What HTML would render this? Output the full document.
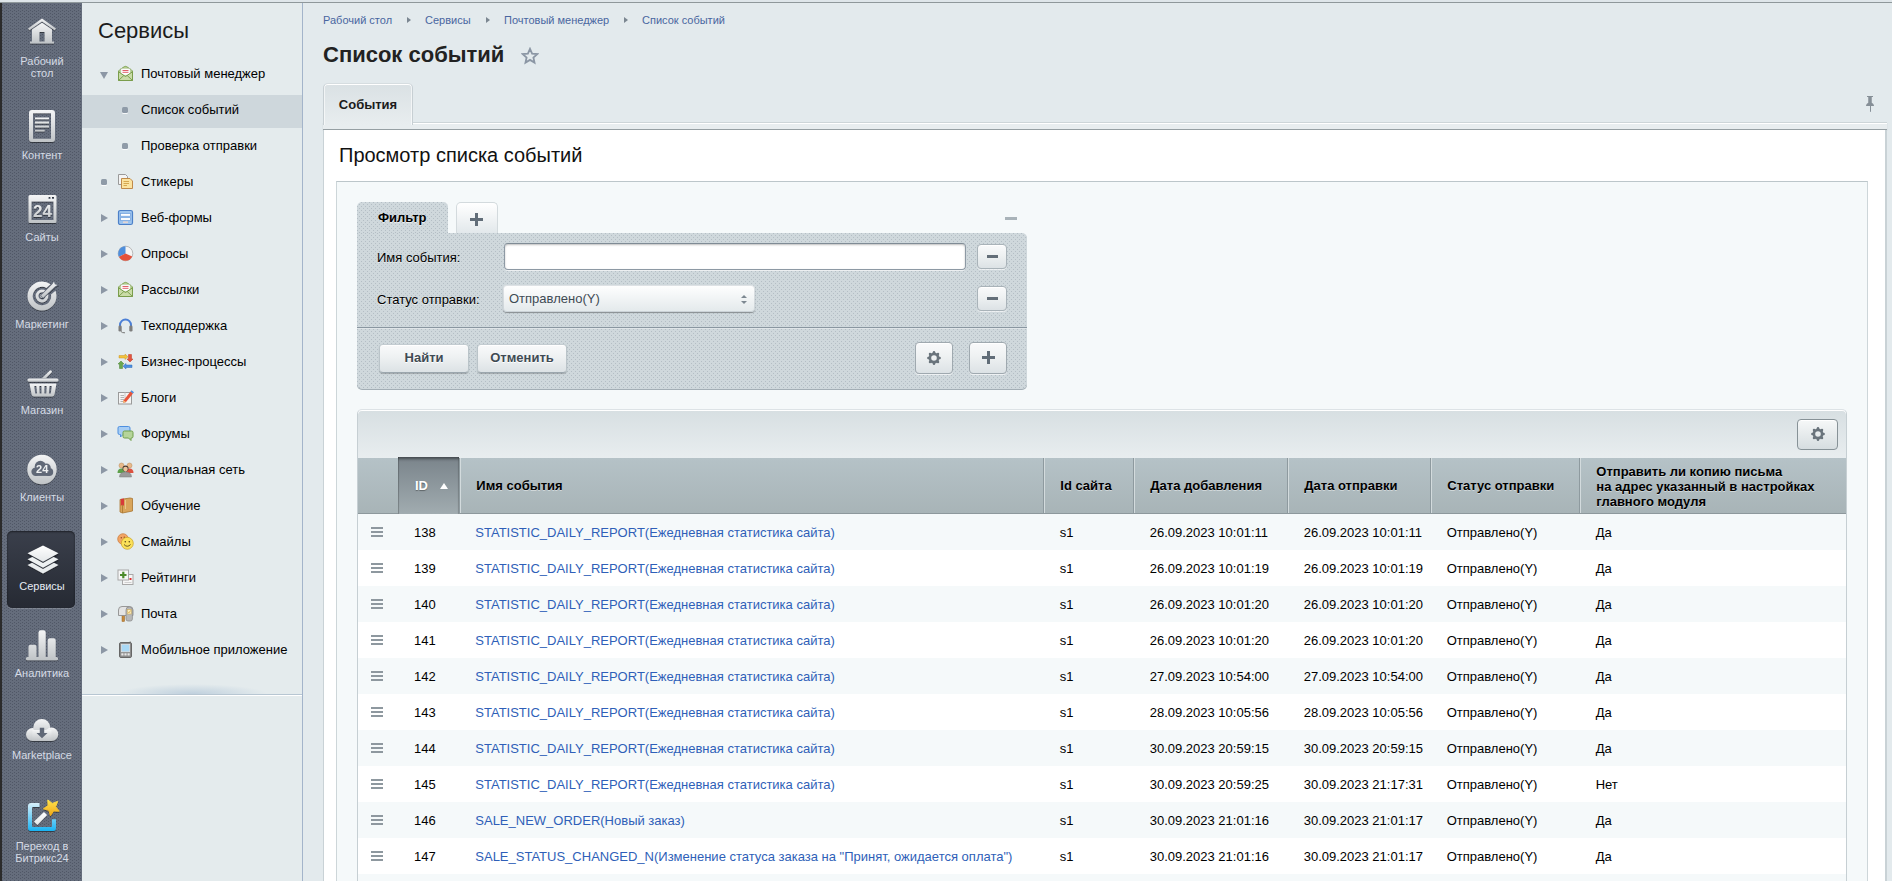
<!DOCTYPE html>
<html lang="ru">
<head>
<meta charset="utf-8">
<title>Список событий</title>
<style>
*{box-sizing:border-box;margin:0;padding:0}
html,body{width:1892px;height:881px;overflow:hidden}
body{font-family:"Liberation Sans",sans-serif;font-size:13px;color:#000;background:#e3eaed;position:relative}
a{text-decoration:none;color:inherit}
.abs{position:absolute}
/* top line */
#topline{position:absolute;left:0;top:0;width:1892px;height:3px;background:#dfe6ea;border-bottom:1px solid #8f989b;z-index:5}
/* dark bar */
#dark{position:absolute;left:0;top:3px;width:82px;height:878px;background-color:#656d7c;background-image:radial-gradient(circle at .5px 1.5px,#505766 0,#505766 .5px,transparent .8px),radial-gradient(circle at 2.5px 2.5px,#505766 0,#505766 .5px,transparent .8px);background-size:4px 3px;border-left:2px solid #2b2b2b}
.mi{position:absolute;left:0;width:80px;text-align:center;color:#d5dbe5;font-size:11px;line-height:12px}
.mi svg{position:absolute}
#act{position:absolute;left:5px;top:528px;width:68px;height:77px;border-radius:5px;background:linear-gradient(#3a3f4b,#262a33);box-shadow:0 1px 0 rgba(255,255,255,.18),inset 0 1px 2px rgba(0,0,0,.5)}
/* submenu */
#sub{position:absolute;left:82px;top:3px;width:221px;height:878px;background:#e4ebed;border-right:1px solid #a3b4ca}
#sub h2{position:absolute;left:16px;top:14px;font-size:22px;font-weight:normal;color:#1c1c1c;line-height:28px}
.si{position:absolute;left:0;width:220px;height:33px;line-height:30px;font-size:13px;color:#000}
.si span{position:absolute;left:59px;top:0;white-space:nowrap}
.si.on{background:#ced7dc}
.arr{position:absolute;left:19px;top:11px;width:0;height:0;border-left:7px solid #8c97a5;border-top:4.5px solid transparent;border-bottom:4.5px solid transparent}
.arrd{position:absolute;left:17.8px;top:12.8px;width:0;height:0;border-top:7.5px solid #8c97a5;border-left:4.8px solid transparent;border-right:4.8px solid transparent}
.dot{position:absolute;width:6px;height:6px;border-radius:1.5px;background:#8f9ba8;box-shadow:0 1px 0 rgba(255,255,255,.8)}
.ic{position:absolute;left:35px;top:6px;width:17px;height:17px}
#subsep{position:absolute;left:0;top:691px;width:220px;height:1px;background:#b7c6d2;box-shadow:0 1px 0 #fff}
#subsep:before{content:"";position:absolute;left:0;top:-11px;width:220px;height:11px;background:radial-gradient(ellipse 75px 10px at 50% 100%,rgba(160,185,208,.55),rgba(160,185,208,0))}
/* main */
#bc{position:absolute;left:323px;top:13px;font-size:11px;line-height:14px;color:#4966a0;white-space:nowrap}
#bc span{position:absolute;top:0;white-space:nowrap}
#bc i{position:absolute;top:4px;width:0;height:0;border-left:4px solid #7b8691;border-top:3.5px solid transparent;border-bottom:3.5px solid transparent}
#title{position:absolute;left:323px;top:40px;font-size:22px;font-weight:bold;color:#222;line-height:30px;white-space:nowrap}
#tab{position:absolute;left:323px;top:83px;width:90px;height:42px;border:1px solid #c7cfd3;border-top-color:#d6dde0;border-bottom:none;border-radius:5px 5px 0 0;background:linear-gradient(#dae1e4,#e8edef);box-shadow:inset 0 1px 0 #fff,inset 1px 0 0 rgba(255,255,255,.6),inset -1px 0 0 rgba(255,255,255,.6);font-size:13px;font-weight:bold;color:#1b1b1b;line-height:41px;text-align:center;z-index:2}
#tabline{position:absolute;left:323px;top:122px;width:1564px;height:8px;background:#e8edef;border-top:1px solid #cdd5d8;border-bottom:1px solid #969fa3;box-shadow:inset 0 1px 0 #fff,0 1px 1px rgba(0,0,0,.12)}
#panel{position:absolute;left:323px;top:130px;width:1564px;height:760px;background:#fff;border-left:1px solid #c9d2d6;border-right:2px solid #c9d2d6}
#ptitle{position:absolute;left:339px;top:142px;font-size:20px;line-height:26px;color:#111;white-space:nowrap}
#inner{position:absolute;left:336px;top:181px;width:1532px;height:720px;background:#f5f9fa;border:1px solid #cdd6d9;border-top-color:#bcc6ca}

#star{position:absolute;left:521px;top:47px}
#pin{position:absolute;left:1864px;top:95px}
/* filter */
.dots{background-color:#cfd8dc;background-image:radial-gradient(circle at .5px .5px,#b4bec5 0,#b4bec5 .5px,transparent .75px),radial-gradient(circle at 2.5px 2.5px,#b4bec5 0,#b4bec5 .5px,transparent .75px);background-size:4px 4px}
#ftab{position:absolute;left:357px;top:202px;width:91px;height:34px;border-radius:5px 5px 0 0;font-size:13px;font-weight:bold;color:#000;text-shadow:0 1px 0 rgba(255,255,255,.6)}
#ftab span{position:absolute;left:21px;top:8px;line-height:15px}
#fplus{position:absolute;left:456px;top:202px;width:42px;height:31px;border:1px solid #d3dadd;border-bottom:none;border-radius:5px 5px 0 0;background:linear-gradient(#fff,#e2e8eb)}
#fmin{position:absolute;left:1005px;top:217px;width:12px;height:3px;background:#a9b3b9}
#fbody{position:absolute;left:357px;top:233px;width:670px;height:156px;border-radius:0 5px 5px 5px;box-shadow:0 1px 0 #a3aeb5}
#fsep{position:absolute;left:357px;top:327px;width:670px;height:1px;background:#8996a0;box-shadow:0 1px 0 #dfe5e8}
.flab{position:absolute;left:377px;font-size:13px;line-height:15px;color:#000;white-space:nowrap;text-shadow:0 1px 0 rgba(255,255,255,.5)}
#finp{position:absolute;left:503.5px;top:243px;width:462px;height:27px;border:1px solid #8d99a4;border-top-color:#7f8b95;border-radius:4px;background:#fff;box-shadow:inset 0 1px 2px rgba(0,0,0,.25),0 1px 0 rgba(255,255,255,.6)}
#fsel{position:absolute;left:503px;top:285px;width:252px;height:27px;border-radius:4px;background:linear-gradient(#fff,#e3e9eb);box-shadow:0 1px 1px rgba(0,0,0,.35),0 0 0 1px rgba(160,172,180,.35) inset;font-size:13px;color:#3f4b54;line-height:28px;padding-left:6px}
.sa{position:absolute;left:238px;width:0;height:0;border-left:3px solid transparent;border-right:3px solid transparent}
.btn{position:absolute;border:1px solid #9fa9af;border-radius:4px;background:linear-gradient(#f9fafb 0%,#eef1f2 45%,#dce2e5 100%);box-shadow:0 1px 0 rgba(255,255,255,.65),inset 0 1px 0 #fff;font-size:13px;font-weight:bold;color:#3f4b54;text-align:center;text-shadow:0 1px 0 #fff}
.b2{border-color:#c3ccd1 #bac4c9 #9ca7ae;box-shadow:0 1px 1px rgba(0,0,0,.22),inset 0 1px 0 #fff}
.mb{width:29.4px;height:25px;left:977.2px;border-color:#a9b3b9}
.mb i{position:absolute;left:9px;top:10px;width:11px;height:3px;background:#636e78}
.plus{position:absolute;width:13px;height:13px}
.plus:before{content:"";position:absolute;left:0;top:5px;width:13px;height:3px;background:#616d78}
.plus:after{content:"";position:absolute;left:5px;top:0;width:3px;height:13px;background:#616d78}
/* table */
#tbl{position:absolute;left:357px;top:409px;width:1490px;height:480px;border:1px solid #c6cfd3;border-top-color:#dde3e6;border-radius:5px 5px 0 0;background:#fff;overflow:hidden}
#tbar{position:absolute;left:0;top:0;width:1488px;height:48px;background:linear-gradient(#d7dfe2,#e8edef);box-shadow:inset 0 1px 0 #fff;border-radius:4px 4px 0 0}
#tgear{position:absolute;left:1439px;top:9px;width:41px;height:31px;border-radius:4px;border:1px solid #879297;background:linear-gradient(#f6f8f8,#d6dde0);box-shadow:inset 0 1px 0 #fff}
#thead{position:absolute;left:0;top:48px;width:1488px;height:56px;background:linear-gradient(#b5c2c7,#a8b4b7);border-bottom:1px solid #8d989c}
.th{position:absolute;top:0;height:56px;font-size:13px;font-weight:bold;color:#000;line-height:15px;text-shadow:0 1px 0 rgba(255,255,255,.45);white-space:nowrap}
.th span{position:absolute;left:16.3px;top:20px}
.sep{position:absolute;top:0;width:2px;height:55px;background:linear-gradient(90deg,#8e9a9f 50%,#d3dbdd 50%)}
#thid{position:absolute;left:40px;top:-1px;width:61px;height:57px;font-weight:bold;background:linear-gradient(#7a848b,#a1acb0);box-shadow:inset 0 3px 3px -1px rgba(0,0,0,.45),inset 1px 0 0 rgba(0,0,0,.15),inset -1px 0 0 rgba(0,0,0,.1);color:#fff;font-size:13px;line-height:15px}
#thid span{position:absolute;left:17px;top:21px;text-shadow:0 1px 1px rgba(0,0,0,.35)}
#thid i{position:absolute;left:42px;top:26px;width:0;height:0;border-left:4px solid transparent;border-right:4px solid transparent;border-bottom:6px solid #fff}
.tr{position:absolute;left:0;width:1488px;height:36px;font-size:13px;line-height:38px;color:#000;white-space:nowrap}
.tr.o{background:#f5f9fa}
.tr span{position:absolute;top:0}
.tr a{color:#2f5fb8}
.hb{position:absolute;left:13px;top:13px;width:12px;height:10px;background:linear-gradient(#8e989f 2px,transparent 2px,transparent 4px,#8e989f 4px,#8e989f 6px,transparent 6px,transparent 8px,#8e989f 8px)}
</style>
</head>
<body>
<svg width="0" height="0" style="position:absolute"><defs>
<linearGradient id="g" x1="0" y1="0" x2="0" y2="1"><stop offset="0" stop-color="#f4f5f6"/><stop offset="1" stop-color="#bfc3c6"/></linearGradient>
<linearGradient id="gw" x1="0" y1="0" x2="0" y2="1"><stop offset="0" stop-color="#ffffff"/><stop offset="1" stop-color="#e4e7e9"/></linearGradient>
<linearGradient id="gb" x1="0" y1="0" x2="0" y2="1"><stop offset="0" stop-color="#d7effa"/><stop offset="1" stop-color="#19b3f3"/></linearGradient>
<linearGradient id="gy" x1="0" y1="0" x2="0" y2="1"><stop offset="0" stop-color="#ffe34d"/><stop offset="1" stop-color="#f0a818"/></linearGradient>
<filter id="sh" x="-20%" y="-20%" width="140%" height="150%"><feDropShadow dx="0" dy="1" stdDeviation="0.6" flood-color="#000" flood-opacity="0.45"/></filter>
</defs></svg>
<div id="topline"></div>
<div id="dark"><div id="act"></div>
<!-- home -->
<svg class="abs" style="left:24px;top:14px" width="34" height="30" viewBox="0 0 34 30" filter="url(#sh)"><path fill="url(#g)" d="M2 11.5 L16 1.5 L30 11.5 L28.6 13.2 L16 4.6 L3.4 13.2 Z"/><path fill="url(#g)" d="M6 12.6 L16 5.8 L26 12.6 V24.4 H28 V26.4 H4 V24.4 H6 Z M13.4 15 V24.4 H18.6 V15 Z" fill-rule="evenodd"/></svg>
<div class="mi" style="top:52px">Рабочий<br>стол</div>
<!-- content -->
<svg class="abs" style="left:25px;top:105px" width="32" height="36" viewBox="0 0 32 36" filter="url(#sh)"><path fill="url(#g)" fill-rule="evenodd" d="M5 2 H25 a3 3 0 0 1 3 3 V31 a3 3 0 0 1 -3 3 H5 a3 3 0 0 1 -3 -3 V5 a3 3 0 0 1 3 -3 Z M6 5.300 V30.700 H24 V5.300 Z"/><path fill="url(#g)" d="M8 9.400 H22 V11.300 H8 Z M8 13.500 H22 V15.400 H8 Z M8 17.600 H22 V19.500 H8 Z M8 21.700 H17.700 V23.600 H8 Z"/></svg>
<div class="mi" style="top:146px">Контент</div>
<!-- sites -->
<svg class="abs" style="left:24px;top:189px" width="34" height="34" viewBox="0 0 34 34" filter="url(#sh)"><path fill="url(#g)" fill-rule="evenodd" d="M4 3 H29 a1.5 1.5 0 0 1 1.500 1.500 V29.500 a1.500 1.500 0 0 1 -1.500 1.500 H4 a1.500 1.500 0 0 1 -1.500 -1.500 V4.500 A1.500 1.500 0 0 1 4 3 Z M5.500 9.500 V28 H27.500 V9.500 Z M22.500 5 V7 H24.500 V5 Z M26 5 V7 H28 V5 Z"/><text x="16.5" y="25" text-anchor="middle" font-family="Liberation Sans" font-weight="bold" font-size="17" fill="url(#g)">24</text></svg>
<div class="mi" style="top:228px">Сайты</div>
<!-- marketing -->
<svg class="abs" style="left:24px;top:275.500px" width="36" height="36" viewBox="0 0 36 36" filter="url(#sh)"><path fill="url(#g)" fill-rule="evenodd" d="M16 2.500 a14.500 14.500 0 1 0 14.500 14.500 a14.500 14.500 0 0 0 -1 -5.300 L25 15.500 a9.200 9.200 0 1 1 -4.600 -6.500 L24.600 5.300 A14.500 14.500 0 0 0 16 2.500 Z M16 10.600 a6.400 6.400 0 1 0 6.400 6.400 a6.400 6.400 0 0 0 -.3 -1.800 L19.600 17.600 A3.600 3.600 0 1 1 17.600 13.600 L19.800 11.800 A6.400 6.400 0 0 0 16 10.600 Z"/><circle cx="16" cy="17" r="1.900" fill="url(#g)"/><path fill="url(#g)" stroke="#606877" stroke-width="1.300" paint-order="stroke" d="M15 16.500 L26.500 5 L28 2.500 L28.800 5.200 L31.500 6 L29 7.500 L17.200 18.700 Z"/></svg>
<div class="mi" style="top:315px">Маркетинг</div>
<!-- shop -->
<svg class="abs" style="left:22px;top:361.500px" width="38" height="34" viewBox="0 0 38 34" filter="url(#sh)"><path fill="url(#g)" d="M5 13.500 H33 a1.500 1.500 0 0 1 0 3.200 H5 a1.500 1.500 0 0 1 0 -3.200 Z"/><path fill="url(#g)" d="M17.500 13.500 L25.600 5.700 a1.300 1.300 0 0 1 1.900 1.900 L21.500 13.500 Z"/><path fill="url(#g)" fill-rule="evenodd" d="M5.500 18.500 H32.500 L30.500 29.500 a2.500 2.500 0 0 1 -2.400 2 H10 a2.500 2.500 0 0 1 -2.400 -2 Z M10.200 21 L11.200 28.500 H13 L12.400 21 Z M15.300 21 L15.600 28.500 H17.500 V21 Z M20.400 21 V28.500 H22.300 L22.700 21 Z M25.500 21 L24.900 28.500 H26.800 L27.800 21 Z"/></svg>
<div class="mi" style="top:401px">Магазин</div>
<!-- clients -->
<svg class="abs" style="left:21.600px;top:449px" width="36" height="36" viewBox="0 0 36 36" filter="url(#sh)"><circle cx="18" cy="17.500" r="14.700" fill="url(#g)"/><g fill="#606877"><circle cx="11.600" cy="19.700" r="4.200"/><circle cx="16.400" cy="14.500" r="5.700"/><circle cx="22.500" cy="15.600" r="4.200"/><circle cx="25.200" cy="19.900" r="4"/><rect x="11.600" y="16" width="13.600" height="7.900"/></g><text x="18.200" y="21.300" text-anchor="middle" font-family="Liberation Sans" font-weight="bold" font-size="11" fill="#eef0f1">24</text></svg>
<div class="mi" style="top:488px">Клиенты</div>
<!-- services -->
<svg class="abs" style="left:23px;top:540px" width="36" height="34" viewBox="0 0 36 34" filter="url(#sh)"><path fill="#e9ecee" d="M18 14.500 L33.500 22 L18 30.500 L2.500 22 Z"/><path fill="#252932" d="M18 19.300 L33.500 17.300 L18 26 L2.500 17.300 Z" opacity=".9"/><path fill="#eef1f2" d="M18 9 L33.500 16.200 L18 24.700 L2.500 16.200 Z"/><path fill="#252932" d="M18 13.500 L33.500 11.200 L18 20 L2.500 11.200 Z" opacity=".9"/><path fill="url(#gw)" d="M18 2.500 L33.500 10.200 L18 18.700 L2.500 10.200 Z"/></svg>
<div class="mi" style="top:577px;color:#e6ebf3">Сервисы</div>
<!-- analytics -->
<svg class="abs" style="left:21px;top:624px" width="38" height="36" viewBox="0 0 38 36" filter="url(#sh)"><path fill="url(#g)" d="M5.500 30 V19.700 a2 2 0 0 1 2 -2 H11.500 a2 2 0 0 1 2 2 V30 H15.500 V5.500 a2.200 2.200 0 0 1 2.200 -2.200 H20.500 a2.200 2.200 0 0 1 2.200 2.200 V30 H24.700 V13.300 a2 2 0 0 1 2 -2 H30.700 a2 2 0 0 1 2 2 V30 H33.500 a1.500 1.500 0 0 1 0 3.300 H4.500 a1.500 1.500 0 0 1 0 -3.300 Z"/></svg>
<div class="mi" style="top:664px">Аналитика</div>
<!-- marketplace -->
<svg class="abs" style="left:22px;top:712px" width="38" height="30" viewBox="0 0 38 30" filter="url(#sh)"><g fill="url(#g)"><circle cx="8.500" cy="19.500" r="6.500"/><circle cx="17.800" cy="12.500" r="8.500"/><circle cx="27.500" cy="19.300" r="6.700"/><rect x="8.500" y="15" width="19" height="11"/></g><path fill="#606877" d="M15.800 12.800 H20.200 V18 H23.500 L18 23.300 L12.500 18 H15.800 Z"/></svg>
<div class="mi" style="top:746px">Marketplace</div>
<!-- b24 -->
<svg class="abs" style="left:22px;top:794px" width="40" height="38" viewBox="0 0 40 38" filter="url(#sh)"><path fill="url(#gb)" d="M7 6 H15.500 V10 H8.800 a.8 .8 0 0 0 -.8 .8 V29.200 a.8 .8 0 0 0 .8 .8 H27.200 a.8 .8 0 0 0 .8 -.8 V22.300 H32 V31 a3 3 0 0 1 -3 3 H7 a3 3 0 0 1 -3 -3 V9 a3 3 0 0 1 3 -3 Z"/><path fill="url(#gw)" d="M10 24.600 L20 15 L23.100 18.100 L13.400 28 Z"/><path fill="url(#gy)" stroke="url(#gy)" stroke-width="1" stroke-linejoin="round" d="M23.82 2.95 L28.29 6.44 L33.59 4.41 L31.65 9.74 L35.22 14.15 L29.55 13.95 L26.46 18.71 L24.90 13.25 L19.42 11.79 L24.12 8.62 Z"/></svg>
<div class="mi" style="top:837px">Переход в<br>Битрикс24</div>
</div>
<div id="sub"><h2>Сервисы</h2>
<div class="si" style="top:56px"><i class="arrd"></i><svg class="ic" viewBox="0 0 17 17"><path d="M1.500 7 Q1.500 5.500 3 4.500 L7.300 1.700 Q8.500 1 9.700 1.700 L14 4.500 Q15.500 5.500 15.500 7 V15.500 H1.500 Z" fill="#b5cf8e" stroke="#7fa254" stroke-width="1"/><path d="M4 3.800 H13 V10 H4 Z" fill="#fff" stroke="#d8d8d8" stroke-width=".5"/><path d="M5.500 5.500 H11.500 M5.500 7.300 H11.500" stroke="#e0606a" stroke-width="1"/><path d="M1.500 6.800 L8.500 11.500 L15.500 6.800 V15.500 H1.500 Z" fill="#cadca8" stroke="#7a9d4c" stroke-width="1" stroke-linejoin="round"/><path d="M1.800 15.200 L7 10.300 M15.200 15.200 L10 10.300" stroke="#7fa252" stroke-width="1"/></svg><span>Почтовый менеджер</span></div>
<div class="si on" style="top:92px"><i class="dot" style="left:40px;top:12px"></i><span>Список событий</span></div>
<div class="si" style="top:128px"><i class="dot" style="left:40px;top:12px"></i><span>Проверка отправки</span></div>
<div class="si" style="top:164px"><i class="dot" style="left:19px;top:12px"></i><svg class="ic" viewBox="0 0 17 17"><path d="M1.500 1.500 H8.500 L10.500 3.500 V11.500 H1.500 Z" fill="#f4f4f4" stroke="#9a9a9a" stroke-width="1"/><path d="M4.500 5.500 H13 L15.500 8 V15.500 H4.500 Z" fill="#fbe3a0" stroke="#c08a4a" stroke-width="1"/><path d="M6.500 8.500 H12 M6.500 10.500 H12 M6.500 12.500 H10" stroke="#d6a850" stroke-width="1"/></svg><span>Стикеры</span></div>
<div class="si" style="top:200px"><i class="arr"></i><svg class="ic" viewBox="0 0 17 17"><rect x="1.500" y="1.500" width="14" height="14" rx="1.800" fill="#9dc4ee" stroke="#4c80c8" stroke-width="1.200"/><rect x="3.600" y="4.600" width="9.800" height="2.600" fill="#fff" stroke="#6f9fdc" stroke-width=".7"/><rect x="3.600" y="8.700" width="9.800" height="2.600" fill="#fff" stroke="#6f9fdc" stroke-width=".7"/><rect x="6" y="12.400" width="5" height="1.600" fill="#e6d6d2"/></svg><span>Веб-формы</span></div>
<div class="si" style="top:236px"><i class="arr"></i><svg class="ic" viewBox="0 0 17 17"><circle cx="8.500" cy="8.500" r="7.300" fill="#f4f4f4" stroke="#a8a8a8" stroke-width=".8"/><path d="M8.500 8.500 L8.500 1.200 A7.300 7.300 0 0 0 2 11.800 Z" fill="#4f8fdc"/><path d="M8.500 8.500 L2 11.800 A7.300 7.300 0 0 0 15.200 11.500 Z" fill="#e4523b"/></svg><span>Опросы</span></div>
<div class="si" style="top:272px"><i class="arr"></i><svg class="ic" viewBox="0 0 17 17"><path d="M1.500 7 Q1.500 5.500 3 4.500 L7.300 1.700 Q8.500 1 9.700 1.700 L14 4.500 Q15.500 5.500 15.500 7 V15.500 H1.500 Z" fill="#b5cf8e" stroke="#7fa254" stroke-width="1"/><path d="M4 3.800 H13 V10 H4 Z" fill="#fff" stroke="#d8d8d8" stroke-width=".5"/><path d="M5.500 5.500 H11.500 M5.500 7.300 H11.500" stroke="#e0606a" stroke-width="1"/><path d="M1.500 6.800 L8.500 11.500 L15.500 6.800 V15.500 H1.500 Z" fill="#cadca8" stroke="#7a9d4c" stroke-width="1" stroke-linejoin="round"/><path d="M1.800 15.200 L7 10.300 M15.200 15.200 L10 10.300" stroke="#7fa252" stroke-width="1"/></svg><span>Рассылки</span></div>
<div class="si" style="top:308px"><i class="arr"></i><svg class="ic" viewBox="0 0 17 17"><path d="M3 11 V8 a5.500 5.500 0 0 1 11 0 V11" fill="none" stroke="#4b7fd6" stroke-width="2"/><rect x="1.500" y="8.500" width="3.200" height="6" rx="1.300" fill="#7d7d7d"/><rect x="12.300" y="8.500" width="3.200" height="6" rx="1.300" fill="#7d7d7d"/><path d="M4 14.500 Q5 16 8 15.800" stroke="#777" fill="none" stroke-width="1"/></svg><span>Техподдержка</span></div>
<div class="si" style="top:344px"><i class="arr"></i><svg class="ic" viewBox="0 0 17 17"><path d="M2 2.500 H8 V1 L11 3.800 L8 6.500 V5 H2 Z" fill="#f3c23b" stroke="#c9962a" stroke-width=".5"/><path d="M11.500 1.500 H14.500 V6 H16 L13 9 L10 6 H11.500 Z" fill="#e5533d" stroke="#b93a28" stroke-width=".5"/><path d="M15 14.500 H9 V16 L6 13.200 L9 10.500 V12 H15 Z" fill="#4d8fe0" stroke="#2f6dbb" stroke-width=".5"/><path d="M5.500 15.500 H2.500 V11 H1 L4 8 L7 11 H5.500 Z" fill="#6aa84f" stroke="#4b8233" stroke-width=".5"/></svg><span>Бизнес-процессы</span></div>
<div class="si" style="top:380px"><i class="arr"></i><svg class="ic" viewBox="0 0 17 17"><rect x="1.500" y="3.500" width="13" height="11.500" fill="#f4f4f4" stroke="#9a9a9a"/><path d="M3.500 6.500 H7 M3.500 8.500 H7 M3.500 10.500 H7 M3.500 12.500 H7" stroke="#b5b5b5" stroke-width="1"/><path d="M8 3.500 V15" stroke="#c8c8c8"/><path d="M6.500 11.500 L13.500 2.500 L16 4.500 L9 13 L6 13.800 Z" fill="#e8533a"/><path d="M13.500 2.500 L14.500 1.200 L17 3.200 L16 4.500 Z" fill="#4d8fe0"/><path d="M6.500 11.500 L9 13 L6 13.800 Z" fill="#f3c777"/></svg><span>Блоги</span></div>
<div class="si" style="top:416px"><i class="arr"></i><svg class="ic" viewBox="0 0 17 17"><path d="M2.500 1.500 H11.500 a1.500 1.500 0 0 1 1.500 1.500 V8 a1.500 1.500 0 0 1 -1.500 1.500 H6 L3.500 12 V9.500 H2.500 A1.500 1.500 0 0 1 1 8 V3 a1.500 1.500 0 0 1 1.500 -1.500 Z" fill="#a7cdf4" stroke="#4d8fe0"/><path d="M7.500 6 H14.500 a1.500 1.500 0 0 1 1.500 1.500 V11.500 a1.500 1.500 0 0 1 -1.500 1.500 H14 V15.500 L11.500 13 H7.500 a1.500 1.500 0 0 1 -1.500 -1.500 V7.500 A1.500 1.500 0 0 1 7.500 6 Z" fill="#b5d49a" stroke="#6f9f4a"/></svg><span>Форумы</span></div>
<div class="si" style="top:452px"><i class="arr"></i><svg class="ic" viewBox="0 0 17 17"><circle cx="4.500" cy="4.500" r="2.500" fill="#e8b98a" stroke="#b98a5a" stroke-width=".5"/><path d="M0.500 12 Q0.500 7.500 4.500 7.500 Q8 7.500 8 12 Z" fill="#5da04a"/><circle cx="12.500" cy="4.500" r="2.500" fill="#e8b98a" stroke="#b98a5a" stroke-width=".5"/><path d="M9 12 Q9 7.500 12.500 7.500 Q16.500 7.500 16.500 12 Z" fill="#dc5240"/><circle cx="8.500" cy="7.500" r="3" fill="#4a3a30"/><circle cx="8.500" cy="8" r="2.300" fill="#edc39a"/><path d="M2.500 16 Q2.500 11 8.500 11 Q14.500 11 14.500 16 Z" fill="#9a9a9a" stroke="#7a7a7a" stroke-width=".5"/></svg><span>Социальная сеть</span></div>
<div class="si" style="top:488px"><i class="arr"></i><svg class="ic" viewBox="0 0 17 17"><path d="M3 2.500 L13 1 L15.500 1.500 V14 L5.500 16 L3 15 Z" fill="#d9a55b" stroke="#a8742f" stroke-width=".8"/><path d="M5.500 3.500 V16" stroke="#a8742f" stroke-width=".8"/><path d="M8.500 3 V12" stroke="#e9c68e" stroke-width="1"/><path d="M3.800 2 L7 1.500 V9 L5.400 7.500 L3.800 9 Z" fill="#d83a3a"/></svg><span>Обучение</span></div>
<div class="si" style="top:524px"><i class="arr"></i><svg class="ic" viewBox="0 0 17 17"><circle cx="6" cy="6" r="5.300" fill="#f3a565" stroke="#c97a3a" stroke-width=".7"/><circle cx="4.300" cy="4.800" r=".7" fill="#8a4a1a"/><circle cx="7.300" cy="4.300" r=".7" fill="#8a4a1a"/><circle cx="10.300" cy="10.300" r="6" fill="#fbe15a" stroke="#c9a227" stroke-width=".7"/><circle cx="8.300" cy="8.800" r=".8" fill="#5a4a1a"/><circle cx="12.300" cy="8.800" r=".8" fill="#5a4a1a"/><path d="M7 11.500 Q10.300 15 13.600 11.500" fill="none" stroke="#5a4a1a" stroke-width=".9"/></svg><span>Смайлы</span></div>
<div class="si" style="top:560px"><i class="arr"></i><svg class="ic" viewBox="0 0 17 17"><rect x="5.500" y="5.500" width="10.500" height="10" fill="#f6f6f6" stroke="#a8a8a8"/><rect x="12.500" y="9" width="2" height="2" fill="#e03030"/><path d="M7.500 13.500 H14.500" stroke="#d0d0d0"/><rect x="1" y="1" width="10.500" height="10" fill="#f6f6f6" stroke="#a8a8a8"/><path d="M6.300 2.800 V9.200 M3 6 H9.500" stroke="#4c8a2b" stroke-width="2.200"/></svg><span>Рейтинги</span></div>
<div class="si" style="top:596px"><i class="arr"></i><svg class="ic" viewBox="0 0 17 17"><rect x="5" y="9" width="2.600" height="7.500" fill="#c68a3c" stroke="#9a6424" stroke-width=".5"/><path d="M1.500 5 a3.500 3.500 0 0 1 3.500 -3.500 H12.500 a3.500 3.500 0 0 1 3.500 3.500 V10.500 H1.500 Z" fill="#e4e4e4" stroke="#8f8f8f" stroke-width=".9"/><path d="M9 5 a3.200 3.200 0 0 1 6.400 0 V14 a2 2 0 0 1 -2 2 H11 a2 2 0 0 1 -2 -2 Z" fill="#b8b8b8" stroke="#858585" stroke-width=".7"/><rect x="10.200" y="4.500" width="4" height="4.500" fill="#fbeec0" stroke="#c9a95a" stroke-width=".6"/><path d="M11 6.800 L12 7.800 L13.600 5.500" stroke="#d6a23a" fill="none" stroke-width=".8"/></svg><span>Почта</span></div>
<div class="si" style="top:632px"><i class="arr"></i><svg class="ic" viewBox="0 0 17 17"><path d="M13.200 2 V0.500" stroke="#777" stroke-width="1.200"/><rect x="2.500" y="1.500" width="12" height="15" rx="1.500" fill="#8c8c8c" stroke="#666"/><rect x="4.300" y="3.300" width="8.400" height="7.500" fill="#a9d8f5" stroke="#e8e8e8" stroke-width=".6"/><rect x="4.300" y="12.300" width="2.200" height="2.200" fill="#e8e8e8"/><rect x="7.400" y="12.300" width="2.200" height="2.200" fill="#e8e8e8"/><rect x="10.500" y="12.300" width="2.200" height="2.200" fill="#e8e8e8"/></svg><span>Мобильное приложение</span></div>
<div id="subsep"></div></div>
<div id="bc"><span style="left:0">Рабочий стол</span><i style="left:84px"></i><span style="left:102px">Сервисы</span><i style="left:163px"></i><span style="left:181px">Почтовый менеджер</span><i style="left:301px"></i><span style="left:319px">Список событий</span></div>
<div id="title">Список событий</div>
<svg id="star" width="18" height="18" viewBox="0 0 18 18"><path d="M9 1.800 L11.100 6.600 L16.300 7.100 L12.400 10.500 L13.500 15.600 L9 12.900 L4.500 15.600 L5.600 10.500 L1.700 7.100 L6.900 6.600 Z" fill="none" stroke="#8b96a4" stroke-width="1.800" stroke-linejoin="miter"/></svg>
<svg id="pin" width="12" height="18" viewBox="0 0 12 18"><path d="M3 0.900 H9 V2.100 H7.750 V7.800 Q9.800 8.800 10.100 11 H1.900 Q2.200 8.800 4.250 7.800 V2.100 H3 Z" fill="#868f97"/><path d="M6.500 11 V16.800" stroke="#868f97" stroke-width="1"/></svg>
<div id="tab">События</div>
<div id="tabline"></div>
<div id="panel"></div>
<div id="ptitle">Просмотр списка событий</div>
<div id="inner"></div>
<div id="ftab" class="dots"><span>Фильтр</span></div>
<div id="fplus"><i class="plus" style="left:13px;top:10px"></i></div>
<div id="fmin"></div>
<div id="fbody" class="dots"></div>
<div id="fsep"></div>
<div class="flab" style="top:250px">Имя события:</div>
<div id="finp"></div>
<div class="btn mb" style="top:243.700px"><i></i></div>
<div class="flab" style="top:292px">Статус отправки:</div>
<div id="fsel">Отправлено(Y)<i class="sa" style="top:10px;border-bottom:3.500px solid #7d8891"></i><i class="sa" style="top:15.500px;border-top:3.500px solid #7d8891"></i></div>
<div class="btn mb" style="top:285.700px"><i></i></div>
<div class="btn b2" style="left:379px;top:344px;width:90px;height:29px;line-height:26px">Найти</div>
<div class="btn b2" style="left:477px;top:344px;width:90px;height:29px;line-height:26px">Отменить</div>
<div class="btn" style="left:915px;top:342px;width:38px;height:32px"><svg class="abs" style="left:11px;top:8px" width="14" height="14" viewBox="0 0 14 14"><g fill="#6a747c"><circle cx="12.65" cy="7.00" r="1.25"/><circle cx="11.00" cy="11.00" r="1.25"/><circle cx="7.00" cy="12.65" r="1.25"/><circle cx="3.00" cy="11.00" r="1.25"/><circle cx="1.35" cy="7.00" r="1.25"/><circle cx="3.00" cy="3.00" r="1.25"/><circle cx="7.00" cy="1.35" r="1.25"/><circle cx="11.00" cy="3.00" r="1.25"/></g><circle cx="7" cy="7" r="4.150" fill="none" stroke="#6a747c" stroke-width="2.700"/></svg></div>
<div class="btn" style="left:969px;top:342px;width:38px;height:32px"><i class="plus" style="left:12px;top:8px"></i></div>
<div id="tbl"><div id="tbar"><div id="tgear"><svg class="abs" style="left:13px;top:7px" width="14" height="14" viewBox="0 0 14 14"><g fill="#6a747c"><circle cx="12.65" cy="7.00" r="1.25"/><circle cx="11.00" cy="11.00" r="1.25"/><circle cx="7.00" cy="12.65" r="1.25"/><circle cx="3.00" cy="11.00" r="1.25"/><circle cx="1.35" cy="7.00" r="1.25"/><circle cx="3.00" cy="3.00" r="1.25"/><circle cx="7.00" cy="1.35" r="1.25"/><circle cx="11.00" cy="3.00" r="1.25"/></g><circle cx="7" cy="7" r="4.150" fill="none" stroke="#6a747c" stroke-width="2.700"/></svg></div></div>
<div id="thead"><div class="sep" style="left:101px"></div><div class="th" style="left:102px"><span>Имя события</span></div><div class="sep" style="left:685px"></div><div class="th" style="left:686px"><span>Id сайта</span></div><div class="sep" style="left:775px"></div><div class="th" style="left:776px"><span>Дата добавления</span></div><div class="sep" style="left:929px"></div><div class="th" style="left:930px"><span>Дата отправки</span></div><div class="sep" style="left:1072px"></div><div class="th" style="left:1073px"><span>Статус отправки</span></div><div class="sep" style="left:1221px"></div><div class="th" style="left:1222px"><span style="top:6px">Отправить ли копию письма<br>на адрес указанный в настройках<br>главного модуля</span></div><div id="thid"><span>ID</span><i></i></div></div>
<div class="tr o" style="top:104px"><i class="hb"></i><span style="left:56px">138</span><span style="left:117.3px"><a>STATISTIC_DAILY_REPORT(Ежедневная статистика сайта)</a></span><span style="left:701.7px">s1</span><span style="left:791.7px">26.09.2023 10:01:11</span><span style="left:945.7px">26.09.2023 10:01:11</span><span style="left:1088.7px">Отправлено(Y)</span><span style="left:1237.7px">Да</span></div>
<div class="tr" style="top:140px"><i class="hb"></i><span style="left:56px">139</span><span style="left:117.3px"><a>STATISTIC_DAILY_REPORT(Ежедневная статистика сайта)</a></span><span style="left:701.7px">s1</span><span style="left:791.7px">26.09.2023 10:01:19</span><span style="left:945.7px">26.09.2023 10:01:19</span><span style="left:1088.7px">Отправлено(Y)</span><span style="left:1237.7px">Да</span></div>
<div class="tr o" style="top:176px"><i class="hb"></i><span style="left:56px">140</span><span style="left:117.3px"><a>STATISTIC_DAILY_REPORT(Ежедневная статистика сайта)</a></span><span style="left:701.7px">s1</span><span style="left:791.7px">26.09.2023 10:01:20</span><span style="left:945.7px">26.09.2023 10:01:20</span><span style="left:1088.7px">Отправлено(Y)</span><span style="left:1237.7px">Да</span></div>
<div class="tr" style="top:212px"><i class="hb"></i><span style="left:56px">141</span><span style="left:117.3px"><a>STATISTIC_DAILY_REPORT(Ежедневная статистика сайта)</a></span><span style="left:701.7px">s1</span><span style="left:791.7px">26.09.2023 10:01:20</span><span style="left:945.7px">26.09.2023 10:01:20</span><span style="left:1088.7px">Отправлено(Y)</span><span style="left:1237.7px">Да</span></div>
<div class="tr o" style="top:248px"><i class="hb"></i><span style="left:56px">142</span><span style="left:117.3px"><a>STATISTIC_DAILY_REPORT(Ежедневная статистика сайта)</a></span><span style="left:701.7px">s1</span><span style="left:791.7px">27.09.2023 10:54:00</span><span style="left:945.7px">27.09.2023 10:54:00</span><span style="left:1088.7px">Отправлено(Y)</span><span style="left:1237.7px">Да</span></div>
<div class="tr" style="top:284px"><i class="hb"></i><span style="left:56px">143</span><span style="left:117.3px"><a>STATISTIC_DAILY_REPORT(Ежедневная статистика сайта)</a></span><span style="left:701.7px">s1</span><span style="left:791.7px">28.09.2023 10:05:56</span><span style="left:945.7px">28.09.2023 10:05:56</span><span style="left:1088.7px">Отправлено(Y)</span><span style="left:1237.7px">Да</span></div>
<div class="tr o" style="top:320px"><i class="hb"></i><span style="left:56px">144</span><span style="left:117.3px"><a>STATISTIC_DAILY_REPORT(Ежедневная статистика сайта)</a></span><span style="left:701.7px">s1</span><span style="left:791.7px">30.09.2023 20:59:15</span><span style="left:945.7px">30.09.2023 20:59:15</span><span style="left:1088.7px">Отправлено(Y)</span><span style="left:1237.7px">Да</span></div>
<div class="tr" style="top:356px"><i class="hb"></i><span style="left:56px">145</span><span style="left:117.3px"><a>STATISTIC_DAILY_REPORT(Ежедневная статистика сайта)</a></span><span style="left:701.7px">s1</span><span style="left:791.7px">30.09.2023 20:59:25</span><span style="left:945.7px">30.09.2023 21:17:31</span><span style="left:1088.7px">Отправлено(Y)</span><span style="left:1237.7px">Нет</span></div>
<div class="tr o" style="top:392px"><i class="hb"></i><span style="left:56px">146</span><span style="left:117.3px"><a>SALE_NEW_ORDER(Новый заказ)</a></span><span style="left:701.7px">s1</span><span style="left:791.7px">30.09.2023 21:01:16</span><span style="left:945.7px">30.09.2023 21:01:17</span><span style="left:1088.7px">Отправлено(Y)</span><span style="left:1237.7px">Да</span></div>
<div class="tr" style="top:428px"><i class="hb"></i><span style="left:56px">147</span><span style="left:117.3px"><a>SALE_STATUS_CHANGED_N(Изменение статуса заказа на "Принят, ожидается оплата")</a></span><span style="left:701.7px">s1</span><span style="left:791.7px">30.09.2023 21:01:16</span><span style="left:945.7px">30.09.2023 21:01:17</span><span style="left:1088.7px">Отправлено(Y)</span><span style="left:1237.7px">Да</span></div>
<div class="tr o" style="top:464px"><i class="hb"></i><span style="left:56px">148</span><span style="left:117.3px"><a>SALE_NEW_ORDER(Новый заказ)</a></span><span style="left:701.7px">s1</span><span style="left:791.7px">30.09.2023 21:05:10</span><span style="left:945.7px">30.09.2023 21:05:11</span><span style="left:1088.7px">Отправлено(Y)</span><span style="left:1237.7px">Да</span></div>
</div>

</body>
</html>
